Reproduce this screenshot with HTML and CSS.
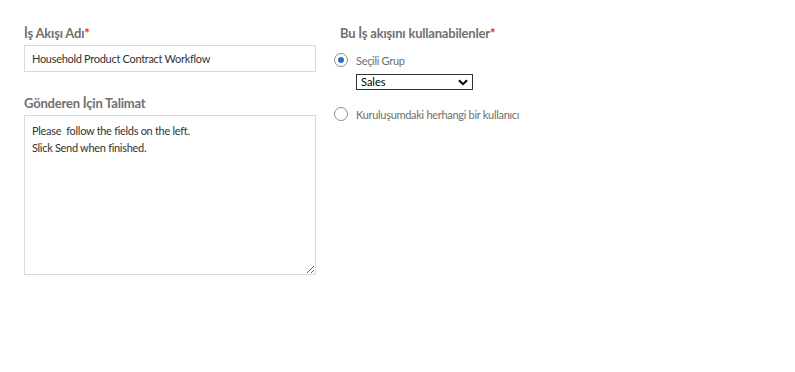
FILE: index.html
```html
<!DOCTYPE html>
<html>
<head>
   <meta http-equiv="Content-Type" content="text/html; charset=UTF-8" />
   <link rel="stylesheet" href="styles.css">
</head>
<body>

<div id="form">
    <div class="col left">
        <div class="field">
            <label class="lbl">İş Akışı Adı<span class="req">*</span></label>
            <input type="text" class="txt" value="Household Product Contract Workflow">
        </div>
        <div class="field">
            <label class="lbl">Gönderen İçin Talimat</label>
            <textarea class="area">Please  follow the fields on the left.
Slick Send when finished.</textarea>
        </div>
    </div>

    <div class="col right">
        <label class="lbl">Bu İş akışını kullanabilenler<span class="req">*</span></label>
        <div class="opt">
            <span class="radio on"></span>
            <span>Seçili Grup</span>
        </div>
        <div class="sel">
            <select><option>Sales</option></select>
            <svg class="chev" width="10" height="7" viewBox="0 0 10 7"><path d="M1 1.2 L5 5.2 L9 1.2" fill="none" stroke="#000" stroke-width="2"/></svg>
        </div>
        <div class="opt second">
            <span class="radio"></span>
            <span>Kuruluşumdaki herhangi bir kullanıcı</span>
        </div>
    </div>
</div>

</body>
</html>
```

FILE: styles.css
```css
* {
    padding: 0; margin: 0;
    box-sizing: border-box;
}
body {
    font-family: Lato, "Open Sans", sans-serif;
    background: #fff;
    color: #4b4b4b;
}
div#form {
    display: flex;
    padding: 25px 0 0 24px;
    gap: 24px;
}
div.col.left {
    width: 292px;
}
div.field {
    margin-bottom: 23px;
}
label.lbl {
    display: block;
    font-size: 13px;
    font-weight: bold;
    color: #707070;
    line-height: 16px;
    margin-bottom: 4px;
    letter-spacing: -0.2px;
}
span.req {
    color: #e02a2a;
}
input.txt {
    display: block;
    width: 292px;
    height: 27px;
    border: 1px solid #dadada;
    padding: 0 7px;
    font-family: inherit;
    font-size: 11px;
    letter-spacing: -0.3px;
    color: #333;
    outline: none;
}
textarea.area {
    display: block;
    width: 292px;
    height: 160px;
    border: 1px solid #dadada;
    padding: 6px 7px;
    font-family: inherit;
    font-size: 11px;
    letter-spacing: -0.3px;
    line-height: 17px;
    color: #333;
    resize: vertical;
    outline: none;
}

div.col.right label.lbl {
    margin-bottom: 11px;
}
div.opt {
    display: flex;
    align-items: center;
    margin-left: -6px;
    font-size: 11px;
    letter-spacing: -0.3px;
    color: #6e6e6e;
    height: 16px;
}
div.opt.second {
    margin-top: 16px;
}
span.radio {
    width: 14px;
    height: 14px;
    border: 1px solid #8c8c8c;
    border-radius: 50%;
    margin-right: 8px;
    position: relative;
}
span.radio.on::after {
    content: "";
    position: absolute;
    left: 3px; top: 3px;
    width: 6px; height: 6px;
    border-radius: 50%;
    background: #2c6fc0;
}
div.sel {
    position: relative;
    width: 117px;
    margin: 6px 0 0 16px;
}
div.sel select {
    appearance: none;
    -webkit-appearance: none;
    display: block;
    width: 117px;
    height: 16px;
    border: 1px solid #333;
    border-radius: 0;
    background: #fff;
    font-family: inherit;
    font-size: 11px;
    color: #000;
    padding: 0 4px;
    line-height: 14px;
}
svg.chev {
    position: absolute;
    right: 5px;
    top: 5px;
    pointer-events: none;
}
```
